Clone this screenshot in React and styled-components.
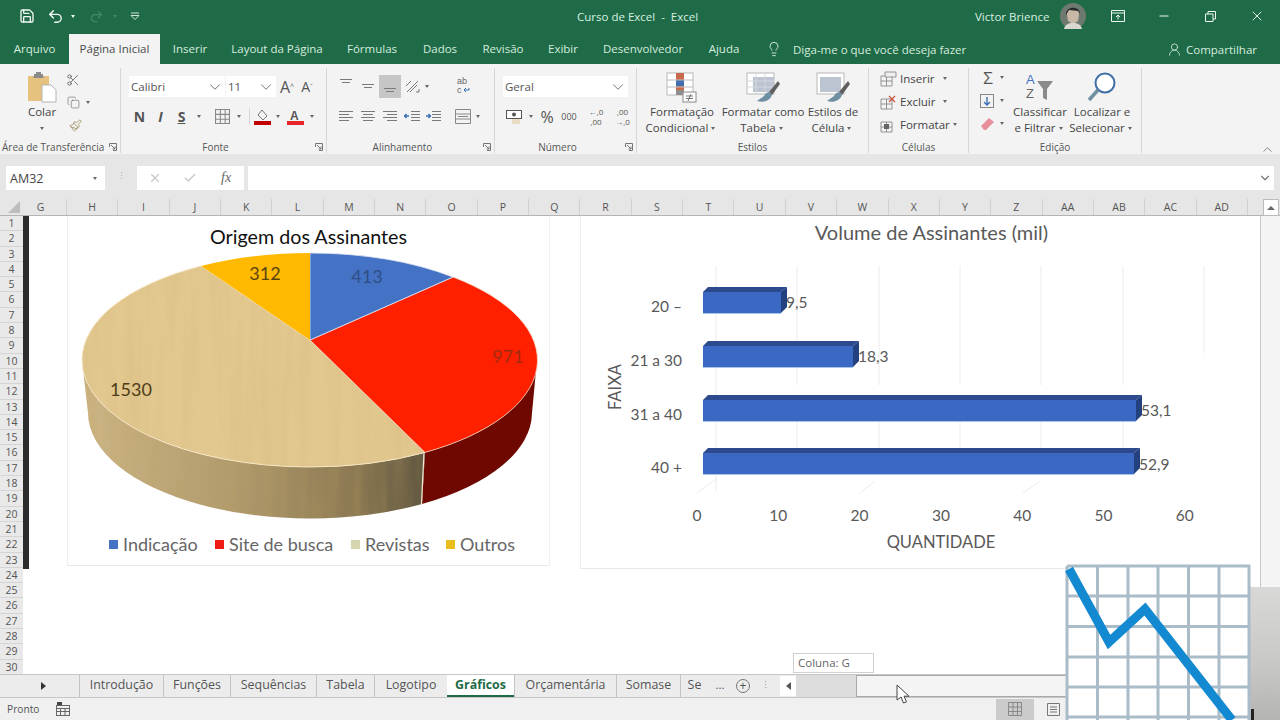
import React from 'react'
import styled, { createGlobalStyle } from 'styled-components'
import { Save, Undo2, Redo2, Scissors, Copy, Paintbrush, Lightbulb, UserRound, X, Check, Minus, ChevronDown, ChevronUp } from 'lucide-react'

const GREEN = '#1f6b47'
const UI = '"Open Sans", "Noto Sans", sans-serif'
const CHART = 'Lato, "Liberation Sans", sans-serif'

const Global = createGlobalStyle`
  html, body { margin: 0; padding: 0; overflow: hidden; background: #fff; }
  * { box-sizing: border-box; }
`

const Page = styled.div`
  position: relative;
  width: 1280px;
  height: 720px;
  overflow: hidden;
  display: flex;
  flex-direction: column;
  font-family: ${UI};
  font-size: 11.5px;
  color: #444;
  background: #e6e6e6;
`

/* title bar */
const TitleBar = styled.div`
  height: 34px;
  flex: none;
  display: flex;
  align-items: center;
  padding-bottom: 2px;
  background: ${GREEN};
  color: #d8efe2;
  position: relative;
`
const Quick = styled.div`
  width: 500px;
  padding-left: 19px;
  display: flex;
  align-items: center;
`
const QuickBtn = styled.span`
  width: ${p => p.$w}px;
  display: flex;
  align-items: center;
  color: ${p => (p.$dim ? '#3f8a66' : '#f2f8f4')};
`
const DocName = styled.div`
  width: 280px;
  text-align: center;
  white-space: pre;
`
const Account = styled.div`
  flex: 1;
  display: flex;
  align-items: center;
  padding-left: 198px;
  white-space: nowrap;
`
const Avatar = styled.svg`
  width: 26px;
  height: 26px;
  margin-left: 10px;
  margin-right: 25px;
  flex: none;
`
const WinBtn = styled.span`
  width: 46.5px;
  flex: none;
  display: flex;
  justify-content: center;
  color: #eef7f2;
`

/* ribbon tabs */
const TabRow = styled.div`
  height: 30px;
  flex: none;
  display: flex;
  align-items: center;
  background: ${GREEN};
  color: #d5ecdf;
`
const RibbonTab = styled.div`
  width: ${p => p.$w}px;
  height: 30px;
  line-height: 30px;
  text-align: center;
  white-space: nowrap;
  background: ${p => (p.$active ? '#f3f3f3' : 'transparent')};
  color: ${p => (p.$active ? '#4a4a4a' : 'inherit')};
`
const TellMe = styled.div`
  display: flex;
  align-items: center;
  gap: 11px;
  margin-left: 14px;
  width: 401px;
`
const Share = styled.div`
  display: flex;
  align-items: center;
  gap: 4px;
`

/* ribbon */
const Ribbon = styled.div`
  height: 90px;
  flex: none;
  display: flex;
  padding-top: 4px;
  background: #f3f3f3;
`
const Group = styled.div`
  width: ${p => p.$w}px;
  height: 85px;
  flex: none;
  display: flex;
  flex-direction: column;
  border-right: 1px solid #d6d6d6;
`
const Body = styled.div`
  height: 70px;
  display: flex;
  padding-left: ${p => p.$pl || 0}px;
`
const Footer = styled.div`
  height: 15px;
  padding-top: 3px;
  padding-left: ${p => p.$pl || 0}px;
  display: grid;
  grid-template-columns: ${p => p.$cols || '1fr 16px'};
  align-items: center;
  text-align: ${p => p.$text || 'center'};
  font-size: 10px;
  line-height: 12px;
  color: #555;
  white-space: nowrap;
`
const Launcher = styled.svg`
  width: 8px;
  height: 8px;
  justify-self: end;
  margin-right: 3px;
`
const Collapse = styled.div`
  margin-left: auto;
  padding: 74px 5px 0 0;
  color: #666;
`
const Stack = styled.div`
  display: flex;
  flex-direction: column;
  width: ${p => p.$w}px;
  margin-top: ${p => p.$mt || 0}px;
  align-items: ${p => p.$align || 'stretch'};
`
const BigLabel = styled.div`
  text-align: center;
  line-height: 16px;
  white-space: nowrap;
`
const BigBtn = styled.div`
  width: ${p => p.$w}px;
  flex: none;
  display: flex;
  flex-direction: column;
  align-items: center;
`
const BigIcon = styled.div`
  height: 36px;
  display: flex;
  align-items: center;
  padding-top: 2px;
`
const Caret = styled.span`
  display: inline-block;
  width: 0;
  height: 0;
  margin: 0 ${p => p.$m ?? 3}px;
  border-left: 2.5px solid transparent;
  border-right: 2.5px solid transparent;
  border-top: 3px solid ${p => p.$c || '#666'};
  vertical-align: middle;
`
const Row = styled.div`
  display: flex;
  align-items: center;
  height: ${p => p.$h || 21}px;
  margin-top: ${p => p.$mt || 0}px;
  padding-left: ${p => p.$pl || 0}px;
`
const Tool = styled.div`
  width: ${p => p.$w}px;
  height: ${p => p.$h || 21}px;
  margin-left: ${p => p.$ml || 0}px;
  flex: none;
  display: flex;
  align-items: ${p => p.$va || 'center'};
  justify-content: center;
  padding: ${p => p.$pad || 0};
  color: #555;
  font-size: ${p => p.$fs || 12}px;
  line-height: ${p => p.$lh || 'normal'};
  text-align: center;
  font-weight: ${p => p.$bold ? 700 : 400};
  font-style: ${p => p.$italic ? 'italic' : 'normal'};
  text-decoration: ${p => p.$under ? 'underline' : 'none'};
  background: ${p => (p.$on ? '#c6c6c6' : 'transparent')};
`
const Sel = styled.div`
  width: ${p => p.$w}px;
  height: 21px;
  margin-right: 1px;
  flex: none;
  padding: 0 1px 0 2px;
  display: flex;
  align-items: center;
  justify-content: space-between;
  background: #fff;
  color: #555;
`
const Divider = styled.div`
  width: 1px;
  height: ${p => p.$h}px;
  margin: ${p => p.$m || '0'};
  background: #d8d8d8;
  flex: none;
`
const CellRow = styled.div`
  height: 23px;
  display: flex;
  align-items: center;
`
const CellIcon = styled.div`
  width: 20px;
  display: flex;
`

/* formula bar */
const FormulaBar = styled.div`
  height: 33px;
  flex: none;
  padding: 0 6px 9px;
  margin-top: 12px;
  display: flex;
  align-items: stretch;
`
const NameBox = styled.div`
  width: 99px;
  background: #fff;
  display: flex;
  align-items: center;
  justify-content: space-between;
  padding: 0 4px;
  font-size: 12.5px;
  color: #444;
`
const Grip = styled.div`
  width: 32px;
  text-align: center;
  line-height: 20px;
  color: #aaa;
  font-size: 9px;
`
const FxBox = styled.div`
  width: 107px;
  background: #fff;
  display: grid;
  grid-template-columns: repeat(3, 1fr);
  align-items: center;
  justify-items: center;
  color: #c8c8c8;
`
const Fx = styled.i`
  font-family: "Liberation Serif", serif;
  font-size: 14px;
  color: #666;
`
const Input = styled.div`
  flex: 1;
  margin-left: 4px;
  background: #fff;
  display: flex;
  align-items: center;
  justify-content: flex-end;
  padding-right: 2px;
  color: #777;
`

/* column header */
const ColHeader = styled.div`
  height: 17px;
  flex: none;
  display: flex;
  border-bottom: 1px solid #b4b4b4;
`
const Corner = styled.svg`
  width: 23px;
  height: 16px;
  flex: none;
`
const ColCell = styled.div`
  width: ${p => p.$w}px;
  flex: none;
  padding-right: ${p => p.$pr || 0}px;
  text-align: center;
  font-size: 10.5px;
  line-height: 16px;
  color: #555;
  border-right: 1px solid #d0d0d0;
`
const ScrollUp = styled.div`
  width: 16px;
  height: 17px;
  margin-left: 15px;
  background: #fff;
  border: 1px solid #bbb;
  display: flex;
  align-items: center;
  justify-content: center;
`
const UpArrow = styled.span`
  width: 0;
  height: 0;
  border-left: 4px solid transparent;
  border-right: 4px solid transparent;
  border-bottom: 4px solid #666;
`

/* sheet */
const Main = styled.div`
  height: 459px;
  flex: none;
  display: flex;
`
const RowHeader = styled.div`
  width: 23px;
  flex: none;
  background: #e9e9e9;
`
const RowNum = styled.div`
  height: 15.3px;
  line-height: 15px;
  text-align: center;
  font-size: 10.5px;
  color: #555;
  border-bottom: 1px solid #d4d4d4;
`
const Sheet = styled.div`
  width: 1237px;
  flex: none;
  background: #fff;
  display: flex;
  align-items: flex-start;
`
const FreezeBar = styled.div`
  width: 6px;
  height: 353px;
  flex: none;
  background: #2b2b2b;
`
const Charts = styled.div`
  display: flex;
  gap: 30px;
  margin-left: 38px;
`
const ChartCard = styled.div`
  width: ${p => p.$w}px;
  height: ${p => p.$h}px;
  flex: none;
  display: flex;
  flex-direction: column;
  border-left: 1px solid #efefef;
  border-right: ${p => (p.$open ? 'none' : '1px solid #efefef')};
  border-bottom: 1px solid #e8e8e8;
  font-family: ${CHART};
`
const ChartTitle = styled.div`
  height: ${p => p.$h}px;
  flex: none;
  text-align: center;
  font-size: ${p => p.$fs}px;
  line-height: ${p => p.$lh}px;
  color: ${p => p.$color};
  padding-left: ${p => p.$pl || 0}px;
`
const Legend = styled.div`
  display: flex;
  padding-left: 41px;
  height: 36px;
  align-items: center;
  font-size: 18px;
  color: #666;
`
const LegendItem = styled.div`
  display: flex;
  align-items: center;
  gap: 5px;
  width: ${p => p.$w}px;
`
const Swatch = styled.span`
  width: 9px;
  height: 9px;
  background: ${p => p.$c};
`
const VScroll = styled.div`
  width: 20px;
  flex: none;
  background: #f4f4f4;
  border-left: 1px solid #c8c8c8;
`

/* sheet tabs */
const TabBar = styled.div`
  height: 24px;
  flex: none;
  margin-top: -1px;
  display: flex;
  align-items: stretch;
  background: #ececec;
  border-top: 1px solid #c6c6c6;
  border-bottom: 1px solid #c6c6c6;
`
const TabNav = styled.div`
  width: 79px;
  flex: none;
  display: flex;
  align-items: center;
  padding-left: 41px;
`
const RightArrow = styled.span`
  width: 0;
  height: 0;
  border-top: 4px solid transparent;
  border-bottom: 4px solid transparent;
  border-left: 5px solid #333;
`
const SheetTab = styled.div`
  width: ${p => p.$w}px;
  flex: none;
  text-align: center;
  font-size: 12.4px;
  line-height: 20px;
  white-space: nowrap;
  overflow: hidden;
  color: ${p => (p.$active ? GREEN : '#555')};
  font-weight: ${p => (p.$active ? 700 : 400)};
  background: ${p => (p.$active ? '#fff' : 'transparent')};
  border-left: ${p => (p.$active ? 'none' : '1px solid #c4c4c4')};
  border-bottom: ${p => (p.$active ? `2px solid ${GREEN}` : 'none')};
`
const TabMore = styled.div`
  width: 24px;
  text-align: center;
  line-height: 20px;
  color: #555;
`
const AddTab = styled.div`
  width: 14px;
  height: 14px;
  margin: 4px 0 0 4px;
  border: 1px solid #777;
  border-radius: 50%;
  display: flex;
  align-items: center;
  justify-content: center;
  font-size: 12px;
  line-height: 1;
  color: #555;
`
const TabGrip = styled.div`
  width: 30px;
  text-align: center;
  line-height: 20px;
  font-size: 9px;
  color: #999;
`
const HScroll = styled.div`
  flex: 1;
  display: flex;
  align-items: stretch;
`
const HBtn = styled.div`
  width: 16px;
  margin: 1px 0;
  background: #fff;
  display: flex;
  align-items: center;
  justify-content: center;
`
const LeftArrow = styled.span`
  width: 0;
  height: 0;
  border-top: 4px solid transparent;
  border-bottom: 4px solid transparent;
  border-right: 5px solid #555;
`
const HTrack = styled.div`
  width: 60px;
  background: #dcdcdc;
`
const HThumb = styled.div`
  flex: 1;
  background: #f4f4f4;
  border: 1px solid #aaa;
`

/* status bar */
const StatusBar = styled.div`
  flex: 1;
  display: flex;
  align-items: center;
  padding-left: 7px;
  background: #f0f0f0;
  font-size: 10.2px;
  color: #555;
`
const StatusIcon = styled.svg`
  width: 14px;
  height: 14px;
  margin-left: 17px;
`
const ViewBtn = styled.div`
  width: 38px;
  height: 21px;
  margin-left: ${p => p.$ml || 0}px;
  display: flex;
  align-items: center;
  justify-content: center;
  background: ${p => (p.$on ? '#cbcbcb' : 'transparent')};
`

/* things lying over the sheet */
const Tooltip = styled.div`
  position: absolute;
  left: 793px;
  top: 653px;
  width: 81px;
  height: 20px;
  padding-left: 4px;
  background: #fff;
  border: 1px solid #d0d0d0;
  color: #666;
  line-height: 18px;
`
const Cursor = styled.svg`
  position: absolute;
  left: 896px;
  top: 684px;
  width: 14px;
  height: 20px;
`
const Photo = styled.div`
  position: absolute;
  left: 1248px;
  top: 587px;
  width: 32px;
  height: 133px;
  background: linear-gradient(180deg, #d8d8d6 0%, #c9c9c7 55%, #b4b4b2 100%);
  &::after {
    content: '';
    position: absolute;
    left: 3px;
    top: 122px;
    width: 3px;
    height: 11px;
    background: #222;
  }
`
const Sticker = styled.svg`
  position: absolute;
  left: 1064px;
  top: 563px;
  width: 188px;
  height: 157px;
`

const Launch = () => (
  <Launcher viewBox="0 0 8 8" fill="none" stroke="#777" strokeWidth="1">
    <path d="M.5 4V.5H7.5V7.5H4M2 2l4 4M6 3.5V6H3.5" />
  </Launcher>
)

const Lines = ({ rows, w = 14 }) => (
  <svg width={w} height={rows.length * 3 + 1} viewBox={`0 0 ${w} ${rows.length * 3 + 1}`} stroke="#7a7a7a" strokeWidth="1">
    {rows.map((r, i) => <line key={i} x1={r[0]} x2={r[1]} y1={i * 3 + 1.5} y2={i * 3 + 1.5} />)}
  </svg>
)

const left5 = [[0, 14], [0, 10], [0, 14], [0, 10]]
const center5 = [[0, 14], [2, 12], [0, 14], [2, 12]]
const right5 = [[0, 14], [4, 14], [0, 14], [4, 14]]

const Indent = ({ flip }) => (
  <svg width="16" height="13" viewBox="0 0 16 13" stroke="#7a7a7a" strokeWidth="1" fill="none">
    <path d="M7 1.5h9M7 4.5h9M7 7.5h9M7 10.5h9" />
    <path d={flip ? 'M1 6h4M3.5 4l2 2-2 2' : 'M1 6h4M2.5 4l-2 2 2 2'} stroke="#3b6fb5" strokeWidth="1.4" />
  </svg>
)

const PasteIcon = () => (
  <svg width="30" height="31" viewBox="0 0 30 31">
    <rect x="1" y="4" width="21" height="25" fill="#e6c27e" />
    <path d="M7 4V2h2V0h5v2h2v2l1 2H6z" fill="#8a8a8a" />
    <path d="M15 13h9l5 5v12H15z" fill="#fff" stroke="#b5b5b5" />
  </svg>
)

const CFIcon = () => (
  <svg width="32" height="31" viewBox="0 0 32 31">
    <rect x="1" y="1" width="26" height="22" fill="#fff" stroke="#b8b8b8" />
    <rect x="10" y="1" width="8" height="22" fill="#c9694b" />
    <rect x="10" y="8" width="8" height="6" fill="#3f6fb0" />
    <rect x="10" y="18" width="8" height="5" fill="#8e8e8e" />
    <path d="M1 8h26M1 15h26" stroke="#bcbcbc" />
    <rect x="17" y="20" width="13" height="10" fill="#fff" stroke="#888" />
    <path d="M20 24h7M20 26.5h7M25 22l-3 7" stroke="#555" strokeWidth=".8" />
  </svg>
)

const TableBrush = ({ dark }) => (
  <svg width="34" height="31" viewBox="0 0 34 31">
    <rect x="1" y="1" width="27" height="21" fill="#fff" stroke="#b8b8b8" />
    <rect x={dark ? 4 : 7} y="5" width="21" height="15" fill="#bcc4d2" />
    {!dark && <path d="M1 9h27M1 15h27M10 1v21M19 1v21" stroke="#d5d8de" />}
    <path d="M32 9l-9 11 3 3 8-11z" fill="#5f5f5f" />
    <path d="M24 20c-3 0-5 2-6 4-2 2-5 3-7 5 6 2 13 0 15-6z" fill="#6f8fa3" />
  </svg>
)

const SortIcon = () => (
  <svg width="30" height="30" viewBox="0 0 30 30">
    <text x="1" y="12" fontSize="13" fill="#4472c4" fontFamily="Liberation Sans">A</text>
    <text x="1" y="26" fontSize="13" fill="#666" fontFamily="Liberation Sans">Z</text>
    <path d="M12 9h16l-6 8v11l-4-2v-9z" fill="#8a8a8a" />
  </svg>
)

const SearchIcon = () => (
  <svg width="30" height="30" viewBox="0 0 30 30" fill="none">
    <circle cx="18" cy="11" r="9.5" stroke="#3f6fa5" strokeWidth="2" fill="#fff" />
    <path d="M11 18L2 28" stroke="#6f8fa3" strokeWidth="3.5" />
  </svg>
)

const GridIcon = ({ size = 14, stroke = '#888', sw = 1 }) => (
  <svg width={size} height={size} viewBox="0 0 14 14" fill="none" stroke={stroke} strokeWidth={sw}>
    <path d="M.5.5h13v13H.5zM.5 5h13M.5 9.500h13M5 .5v13M9.500.5v13" />
  </svg>
)

const CellsIcon = ({ mark }) => (
  <svg width="17" height="16" viewBox="0 0 17 16" fill="none" stroke="#8a8a8a" strokeWidth=".9">
    <path d="M1 5h11v10H1zM1 10h11M6.500 5v10" />
    {mark === 'ins' && <path d="M5 1h11v5H5z" fill="#eee" />}
    {mark === 'del' && <path d="M9 2l6 6M15 2L9 8" stroke="#c8553d" strokeWidth="1.3" />}
    {mark === 'fmt' && <rect x="4" y="7" width="5" height="5" fill="#666" stroke="none" />}
  </svg>
)

const Ribbons = [
  ['Arquivo', 69], ['Página Inicial', 91, true], ['Inserir', 60], ['Layout da Página', 114], ['Fórmulas', 76],
  ['Dados', 60], ['Revisão', 66], ['Exibir', 54], ['Desenvolvedor', 106], ['Ajuda', 56],
]
const Columns = 'H I J K L M N O P Q R S T U V W X Y Z AA AB AC AD'.split(' ')
const SheetTabs = [
  ['Introdução', 84], ['Funções', 67], ['Sequências', 86], ['Tabela', 58], ['Logotipo', 73],
  ['Gráficos', 67, true], ['Orçamentária', 102], ['Somase', 64], ['Se', 28],
]

const TAN_TOP = 'M310,339 L425,451.4 A228,107 0 0 1 310,466 A228,107 0 0 1 82,359 A228,107 0 0 1 201,265 Z'

const PieChart = () => (
  <svg width="481" height="274" viewBox="68 251 481 274" style={{ flex: 'none' }}>
    <defs>
      <linearGradient id="tanSide" x1="0" x2="1" y1="0" y2="0">
        <stop offset="0" stopColor="#cdb585" />
        <stop offset=".45" stopColor="#b09a6c" />
        <stop offset=".8" stopColor="#8b7852" />
        <stop offset="1" stopColor="#5f5640" />
      </linearGradient>
      <filter id="wood" x="0" y="0" width="1" height="1">
        <feTurbulence type="fractalNoise" baseFrequency="0.08 0.006" numOctaves="3" seed="7" />
        <feColorMatrix values="0 0 0 0 .5  0 0 0 0 .36  0 0 0 0 .12  1.1 0 0 0 -.42" />
        <feComposite in2="SourceAlpha" operator="in" />
      </filter>
    </defs>
    <path d="M82,359 A228,107 0 0 0 425,451.4 L422,503 A222,106 0 0 1 88,412 Z" fill="url(#tanSide)" />
    <path d="M82,359 A228,107 0 0 0 425,451.4 L422,503 A222,106 0 0 1 88,412 Z" filter="url(#wood)" opacity=".5" />
    <path d="M425,451.4 A228,107 0 0 0 537,359 L532,412 A222,106 0 0 1 422,503 Z" fill="#6e0800" />
    <path d="M424,451 L421.500,503" stroke="#f3e8d2" strokeWidth="1.2" />
    <path d={TAN_TOP} fill="#e2c88f" stroke="#f6e7c6" strokeWidth="1" />
    <path d={TAN_TOP} filter="url(#wood)" opacity=".28" />
    <path d="M310,339 L453,276 A228,107 0 0 1 425,451.4 Z" fill="#ff2000" stroke="#f6dcc8" strokeWidth=".8" />
    <path d="M310,339 L310,252 A228,107 0 0 1 453,276 Z" fill="#4472c4" stroke="#dfe6f5" strokeWidth=".8" />
    <path d="M310,339 L201,265 A228,107 0 0 1 310,252 Z" fill="#ffb900" />
    <g fontFamily={CHART} fontSize="18">
      <text x="367" y="282" textAnchor="middle" fill="#2f4f86">413</text>
      <text x="508" y="362" textAnchor="middle" fill="#a32a10">971</text>
      <text x="265" y="279" textAnchor="middle" fill="#5a4410">312</text>
      <text x="131" y="395" textAnchor="middle" fill="#4d3b18">1530</text>
    </g>
  </svg>
)

const Bar = ({ y, x2 }) => (
  <g>
    <path d={`M703 ${y + 5}L708 ${y}H${x2 + 6}L${x2} ${y + 5}Z`} fill="#2d4a8e" />
    <path d={`M${x2} ${y + 5}L${x2 + 6} ${y}V${y + 20}L${x2} ${y + 26}Z`} fill="#24417f" />
    <rect x="703" y={y + 5} width={x2 - 703} height="21" fill="#3b68c3" />
    <path d={`M703 ${y + 26.500}H${x2}`} stroke="#a9c6ea" strokeWidth="1" />
  </g>
)

const BarChart = () => (
  <svg width="668" height="315" viewBox="581 252 668 315" style={{ flex: 'none' }}>
    <g stroke="#ececec" strokeWidth="1">
      <path d="M716 265V490M797 265V384M879 265V384M960 265V384M1041 265V384M1123 265V384M1204 265V352" />
      <path d="M797 420V474M879 420V474M960 420V474M1041 420V474M1123 420V474" />
      <path d="M697 492L716 478M860 492L875 480M1023 492L1040 480" />
    </g>
    <Bar y={286} x2={781} />
    <Bar y={340} x2={853} />
    <Bar y={394} x2={1136} />
    <Bar y={447} x2={1134} />
    <g fontFamily={CHART} fontSize="15.500" fill="#595959">
      <text x="786" y="307">9,5</text>
      <text x="858" y="361">18,3</text>
      <text x="1141" y="415">53,1</text>
      <text x="1139" y="469">52,9</text>
      <text x="682" y="311" textAnchor="end">20 –</text>
      <text x="682" y="365" textAnchor="end">21 a 30</text>
      <text x="682" y="419" textAnchor="end">31 a 40</text>
      <text x="682" y="472" textAnchor="end">40 +</text>
      {[0, 10, 20, 30, 40, 50, 60].map((n, i) => (
        <text key={n} x={697 + i * 81.3} y="520" textAnchor="middle">{n}</text>
      ))}
      <text x="941" y="547" textAnchor="middle" fontSize="16.500">QUANTIDADE</text>
      <text transform="translate(621 386) rotate(-90)" textAnchor="middle" fontSize="16.500">FAIXA</text>
    </g>
  </svg>
)

export default function App() {
  return (
    <Page>
      <Global />
      <TitleBar>
        <Quick>
          <QuickBtn $w={28}><Save size={16} strokeWidth={2} /></QuickBtn>
          <QuickBtn $w={24}><Undo2 size={17} strokeWidth={2} /></QuickBtn>
          <QuickBtn $w={18}><Caret $m={0} $c="#eef7f2" /></QuickBtn>
          <QuickBtn $w={24} $dim><Redo2 size={15} /></QuickBtn>
          <QuickBtn $w={17} $dim><Caret $m={0} $c="#3f8a66" /></QuickBtn>
          <QuickBtn $w={14}>
            <svg width="10" height="8" viewBox="0 0 10 8" fill="none" stroke="#cfe6d9"><path d="M1 1h8M1 3.500h8L5 7.500z" /></svg>
          </QuickBtn>
        </Quick>
        <DocName>{'Curso de Excel  -  Excel'}</DocName>
        <Account>
          Victor Brience
          <Avatar viewBox="0 0 26 26">
            <circle cx="13" cy="13" r="13" fill="#6e7a70" />
            <path d="M7 12c-1-8 13-9 12 0l-1 6-5 3-5-3z" fill="#c7b9a5" />
            <path d="M6 12C5 3 20 2 20 11l-2-3-9-1z" fill="#2b2b2b" />
            <path d="M4 26c1-5 5-6 9-6s8 1 9 6z" fill="#d8d8d0" />
          </Avatar>
          <svg width="14" height="12" viewBox="0 0 14 12" fill="none" stroke="#eef7f2" style={{ flex: 'none', marginRight: 16 }}><path d="M.5.5h13v11H.5zM.5 3h13M7 9.500V5M5 7l2-2 2 2" /></svg>
          <WinBtn><Minus size={14} /></WinBtn>
          <WinBtn>
            <svg width="11" height="11" viewBox="0 0 11 11" fill="none" stroke="#eef7f2"><path d="M.5 3h7.500v7.500H.5zM3 3V.5h7.500V8H8" /></svg>
          </WinBtn>
          <WinBtn><X size={16} strokeWidth={1.4} /></WinBtn>
        </Account>
      </TitleBar>

      <TabRow>
        {Ribbons.map(([label, w, active]) => <RibbonTab key={label} $w={w} $active={active}>{label}</RibbonTab>)}
        <TellMe><Lightbulb size={16} strokeWidth={1.4} />Diga-me o que você deseja fazer</TellMe>
        <Share><UserRound size={15} strokeWidth={1.3} />Compartilhar</Share>
      </TabRow>

      <Ribbon>
        <Group $w={121}>
          <Body $pl={18}>
            <Stack $w={48} $align="center">
              <BigIcon><PasteIcon /></BigIcon>
              <BigLabel>Colar</BigLabel>
              <BigLabel><Caret /></BigLabel>
            </Stack>
            <Stack $w={40}>
              <Row $h={23}><Tool $w={14} $h={23}><Scissors size={14} strokeWidth={1.3} /></Tool></Row>
              <Row $h={23}><Tool $w={14} $h={23}><Copy size={13} strokeWidth={1} /></Tool><Caret $m={6} /></Row>
              <Row $h={23}><Tool $w={18} $h={23}><Paintbrush size={13} color="#9a8a5a" strokeWidth={1.5} /></Tool></Row>
            </Stack>
          </Body>
          <Footer $cols="1fr 14px" $text="left" $pl={2}><span>Área de Transferência</span><Launch /></Footer>
        </Group>

        <Group $w={206}>
          <Body $pl={8}>
            <Stack $w={198}>
              <Row $mt={8}>
                <Sel $w={96}>Calibri<ChevronDown size={18} strokeWidth={1.1} /></Sel>
                <Sel $w={50}>11<ChevronDown size={18} strokeWidth={1.1} /></Sel>
                <Tool $w={20} $fs={16}>A<sup style={{ fontSize: 7 }}>^</sup></Tool>
                <Tool $w={20} $fs={14}>A<sup style={{ fontSize: 7 }}>ˇ</sup></Tool>
              </Row>
              <Row $mt={9}>
                <Tool $w={21} $bold $fs={14}>N</Tool>
                <Tool $w={21} $italic $bold $fs={14}>I</Tool>
                <Tool $w={21} $under $bold $fs={14}>S</Tool>
                <Tool $w={14}><Caret $m={0} /></Tool>
                <Tool $w={20} $ml={6}><GridIcon size={15} /></Tool>
                <Tool $w={14}><Caret $m={0} /></Tool>
                <Divider $h={17} $m="0 0 0 3px" />
                <Tool $w={22} $ml={1}>
                  <svg width="17" height="16" viewBox="0 0 17 16"><path d="M8 1l5 6-4 4-5-5z" fill="none" stroke="#777" /><rect y="12" width="17" height="4" fill="#c00000" /></svg>
                </Tool>
                <Tool $w={10}><Caret $m={0} /></Tool>
                <Tool $w={22} $ml={1}>
                  <svg width="17" height="16" viewBox="0 0 17 16"><text x="3" y="11" fontSize="12" fontWeight="700" fill="#555" fontFamily="Liberation Sans">A</text><rect y="12" width="17" height="4" fill="#e8262a" /></svg>
                </Tool>
                <Tool $w={12}><Caret $m={0} /></Tool>
              </Row>
            </Stack>
          </Body>
          <Footer><span>Fonte</span><Launch /></Footer>
        </Group>

        <Group $w={168}>
          <Body $pl={8}>
            <Stack $w={110}>
              <Row $h={23} $mt={7}>
                <Tool $w={22} $h={23} $va="flex-start" $pad="3px 0 0"><Lines rows={[[0, 12], [2, 10]]} w={12} /></Tool>
                <Tool $w={22} $h={23}><Lines rows={[[0, 12], [2, 10]]} w={12} /></Tool>
                <Tool $w={22} $h={23} $on $va="flex-end" $pad="0 0 4px"><Lines rows={[[0, 12], [2, 10]]} w={12} /></Tool>
                <Tool $w={22} $h={23}>
                  <svg width="15" height="15" viewBox="0 0 15 15" fill="none" stroke="#777"><path d="M2 13L13 2M5 13l7-7M1 7l5-5M11 13h3v-3" /></svg>
                </Tool>
                <Caret $m={2} />
              </Row>
              <Row $mt={8}>
                <Tool $w={22}><Lines rows={left5} /></Tool>
                <Tool $w={22}><Lines rows={center5} /></Tool>
                <Tool $w={22}><Lines rows={right5} /></Tool>
                <Tool $w={22}><Indent /></Tool>
                <Tool $w={20}><Indent flip /></Tool>
              </Row>
            </Stack>
            <Stack $w={40}>
              <Row $h={30} $mt={3} $pl={11}>
                <svg width="14" height="20" viewBox="0 0 14 20"><text x="1" y="8" fontSize="9" fill="#666" fontFamily="Liberation Sans">ab</text><text x="1" y="17" fontSize="9" fill="#666" fontFamily="Liberation Sans">c</text><path d="M8 14h5v-2M8 14l2-2M8 14l2 2" stroke="#3b6fb5" fill="none" /></svg>
              </Row>
              <Row $mt={5} $pl={10}>
                <svg width="16" height="15" viewBox="0 0 16 15" fill="none" stroke="#888"><path d="M.5.5h15v14H.5zM.5 5h15M.5 10h15M3 7.500h10" /></svg>
                <Caret $m={5} />
              </Row>
            </Stack>
          </Body>
          <Footer><span>Alinhamento</span><Launch /></Footer>
        </Group>

        <Group $w={142}>
          <Body $pl={8}>
            <Stack $w={127}>
              <Row $mt={8}><Sel $w={125}>Geral<ChevronDown size={18} strokeWidth={1.1} /></Sel></Row>
              <Row $mt={9}>
                <Tool $w={22}>
                  <svg width="16" height="14" viewBox="0 0 16 14"><rect x=".5" y=".5" width="15" height="8" fill="#fff" stroke="#555" /><circle cx="8" cy="4.500" r="2" fill="#555" /><rect x="6" y="9" width="8" height="5" fill="#e8dcc5" /></svg>
                </Tool>
                <Tool $w={12}><Caret $m={0} /></Tool>
                <Tool $w={20} $fs={16}>%</Tool>
                <Tool $w={24} $fs={9}>000</Tool>
                <Tool $w={30} $fs={8} $lh="10px"><span>←,0<br />,00</span></Tool>
                <Tool $w={23} $fs={8} $lh="10px"><span>,00<br />→,0</span></Tool>
              </Row>
            </Stack>
          </Body>
          <Footer><span>Número</span><Launch /></Footer>
        </Group>

        <Group $w={232}>
          <Body $pl={5}>
            <BigBtn $w={80}>
              <BigIcon><CFIcon /></BigIcon>
              <BigLabel>Formatação<br />Condicional<Caret /></BigLabel>
            </BigBtn>
            <BigBtn $w={82}>
              <BigIcon><TableBrush /></BigIcon>
              <BigLabel>Formatar como<br />Tabela<Caret /></BigLabel>
            </BigBtn>
            <BigBtn $w={58}>
              <BigIcon><TableBrush dark /></BigIcon>
              <BigLabel>Estilos de<br />Célula<Caret /></BigLabel>
            </BigBtn>
          </Body>
          <Footer $cols="1fr"><span>Estilos</span></Footer>
        </Group>

        <Group $w={100}>
          <Body $pl={11}>
            <Stack $w={88} $mt={-1}>
              <CellRow><CellIcon><CellsIcon mark="ins" /></CellIcon>Inserir<Caret $m={8} /></CellRow>
              <CellRow><CellIcon><CellsIcon mark="del" /></CellIcon>Excluir<Caret $m={8} /></CellRow>
              <CellRow><CellIcon><CellsIcon mark="fmt" /></CellIcon>Formatar<Caret $m={3} /></CellRow>
            </Stack>
          </Body>
          <Footer $cols="1fr"><span>Células</span></Footer>
        </Group>

        <Group $w={173}>
          <Body $pl={11}>
            <Stack $w={29} $mt={-2}>
              <Row $h={23}><Tool $w={16} $h={23} $fs={17}>Σ</Tool><Caret $m={4} /></Row>
              <Row $h={23}>
                <svg width="16" height="15" viewBox="0 0 16 15" fill="none"><rect x=".5" y="1.500" width="13" height="13" stroke="#888" /><path d="M7 4v8M4 9l3 3 3-3" stroke="#3b6fb5" strokeWidth="1.4" /></svg>
                <Caret $m={4} />
              </Row>
              <Row $h={23}>
                <svg width="16" height="14" viewBox="0 0 16 14"><path d="M1 9l8-8 5 4-8 8H4z" fill="#e88f9c" /></svg>
                <Caret $m={4} />
              </Row>
            </Stack>
            <BigBtn $w={62}>
              <BigIcon><SortIcon /></BigIcon>
              <BigLabel>Classificar<br />e Filtrar<Caret /></BigLabel>
            </BigBtn>
            <BigBtn $w={62}>
              <BigIcon><SearchIcon /></BigIcon>
              <BigLabel>Localizar e<br />Selecionar<Caret /></BigLabel>
            </BigBtn>
          </Body>
          <Footer $cols="1fr"><span>Edição</span></Footer>
        </Group>
        <Collapse><ChevronUp size={15} strokeWidth={1.2} /></Collapse>
      </Ribbon>

      <FormulaBar>
        <NameBox>AM32<Caret $m={4} /></NameBox>
        <Grip>⋮</Grip>
        <FxBox><X size={14} strokeWidth={2} /><Check size={14} strokeWidth={2.4} /><Fx>fx</Fx></FxBox>
        <Input><ChevronDown size={14} strokeWidth={2} /></Input>
      </FormulaBar>

      <ColHeader>
        <Corner viewBox="0 0 23 16"><path d="M20 2V14H8z" fill="#bdbdbd" /></Corner>
        <ColCell $w={44} $pr={8}>G</ColCell>
        {Columns.map(c => <ColCell key={c} $w={51.35}>{c}</ColCell>)}
        <ScrollUp><UpArrow /></ScrollUp>
      </ColHeader>

      <Main>
        <RowHeader>
          {Array.from({ length: 30 }, (_, i) => <RowNum key={i}>{i + 1}</RowNum>)}
        </RowHeader>
        <Sheet>
          <FreezeBar />
          <Charts>
            <ChartCard $w={483} $h={350}>
              <ChartTitle $h={36} $fs={19.700} $lh={41} $color="#111">Origem dos Assinantes</ChartTitle>
              <PieChart />
              <Legend>
                <LegendItem $w={106}><Swatch $c="#4472c4" />Indicação</LegendItem>
                <LegendItem $w={136}><Swatch $c="#ee1c14" />Site de busca</LegendItem>
                <LegendItem $w={95}><Swatch $c="#d6d5b0" />Revistas</LegendItem>
                <LegendItem><Swatch $c="#e9bd1e" />Outros</LegendItem>
              </Legend>
            </ChartCard>
            <ChartCard $w={670} $h={353} $open>
              <ChartTitle $h={37} $fs={20} $lh={33} $color="#595959" $pl={32}>Volume de Assinantes (mil)</ChartTitle>
              <BarChart />
            </ChartCard>
          </Charts>
        </Sheet>
        <VScroll />
      </Main>

      <TabBar>
        <TabNav><RightArrow /></TabNav>
        {SheetTabs.map(([label, w, active]) => <SheetTab key={label} $w={w} $active={active}>{label}</SheetTab>)}
        <TabMore>...</TabMore>
        <AddTab>+</AddTab>
        <TabGrip>⋮</TabGrip>
        <HScroll>
          <HBtn><LeftArrow /></HBtn>
          <HTrack />
          <HThumb />
        </HScroll>
      </TabBar>

      <StatusBar>
        Pronto
        <StatusIcon viewBox="0 0 14 14" fill="none" stroke="#666">
          <rect x=".5" y="3.500" width="13" height="10" />
          <path d="M.5 6.500h13M.5 9.500h13M4.500 6.500v7M9 6.500v7" />
          <rect x="1" y="0" width="5" height="3" fill="#444" stroke="none" />
        </StatusIcon>
        <ViewBtn $on $ml={926}><GridIcon /></ViewBtn>
        <ViewBtn>
          <svg width="13" height="13" viewBox="0 0 13 13" fill="none" stroke="#777"><path d="M.5.5h12v12H.5zM3 4h7M3 6.500h7M3 9h7" /></svg>
        </ViewBtn>
      </StatusBar>

      <Tooltip>Coluna: G</Tooltip>
      <Cursor viewBox="0 0 14 20">
        <path d="M1 1v15l4-3 2.500 6 3-1.200L8 12.200h5z" fill="#fff" stroke="#444" strokeWidth="1" />
      </Cursor>
      <Photo />
      <Sticker viewBox="0 0 188 157">
        <rect x="3" y="3" width="183" height="160" fill="#fff" />
        <path
          d="M3 3H185V170M3 3V170M33.500 3V170M64 3V170M94 3V170M124.500 3V170M155 3V170M3 33H185M3 63.500H185M3 94H185M3 124H185M3 154H185"
          fill="none"
          stroke="#a9bcc7"
          strokeWidth="3"
        />
        <path d="M5 6L45 79L81 46L168 157" fill="none" stroke="#1289d0" strokeWidth="9" strokeLinejoin="miter" />
      </Sticker>
    </Page>
  )
}
